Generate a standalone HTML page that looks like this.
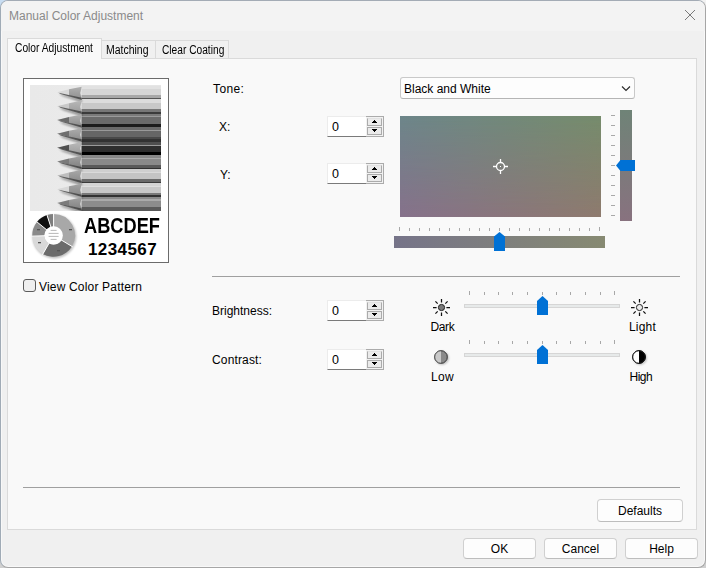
<!DOCTYPE html>
<html><head><meta charset="utf-8">
<style>
html,body{margin:0;padding:0;width:706px;height:568px;overflow:hidden;background:#d0d0d0;}
*{box-sizing:border-box;}
body{font-family:"Liberation Sans",sans-serif;font-size:12px;color:#000;}
.a{position:absolute;}
.t{position:absolute;white-space:nowrap;line-height:12px;font-size:12px;}
#win{position:absolute;left:0;top:0;width:706px;height:568px;border:1px solid #a6a6a6;border-top-color:#a3abb5;border-left-color:#a0abb6;border-radius:8px;background:#f0f0f0;overflow:hidden;box-shadow:inset 0 0 0 1px #f8f8f8;}
#title{position:absolute;left:0;top:0;width:704px;height:30px;background:#f3f3f3;}
.tab{position:absolute;border:1px solid #dadada;border-bottom:none;background:#f0f0f0;}
.spin{position:absolute;width:57px;height:21px;}
.spin .f{position:absolute;left:0;top:0;width:39px;height:21px;background:#fff;border:1px solid #ececec;border-right:none;border-bottom:1px solid #7a7a7a;}
.spin .b{position:absolute;left:39px;top:0;width:18px;height:21px;border:1px solid #ababab;border-left:none;background:#f2f2f2;}
.spin .u,.spin .d{position:absolute;left:1px;width:15px;height:8px;border:1px solid #ababab;background:#ebebeb;}
.spin .u{top:1px;border-top-color:#e2e2e2;height:8px;}
.spin .d{top:10px;}
.spin .v{position:absolute;left:4px;top:4px;line-height:12px;font-size:12.5px;}
.spin svg{position:absolute;left:0;top:0;}
.btn{position:absolute;border:1px solid #d0d0d0;border-bottom-color:#bdbdbd;border-radius:4px;background:#fdfdfd;text-align:center;}
</style></head><body>
<div class="a" style="left:0;top:0;width:12px;height:12px;background:#c8ddf2;"></div>
<div class="a" style="left:694px;top:0;width:12px;height:12px;background:#f2f2f2;"></div>
<div id="win">
  <div id="title"></div>
</div>
<!-- title text -->
<div class="t" style="left:9px;top:10px;color:#8a8a8a;">Manual Color Adjustment</div>
<svg class="a" style="left:684px;top:9px" width="12" height="12"><path d="M1 1L11 11M11 1L1 11" stroke="#7a7a7a" stroke-width="1"/></svg>

<!-- tab panel -->
<div class="a" style="left:7px;top:58px;width:690px;height:472px;border:1px solid #dadada;background:#f9f9f9;"></div>
<div class="tab" style="left:101px;top:40px;width:55px;height:18px;"></div>
<div class="tab" style="left:155px;top:40px;width:74px;height:18px;"></div>
<div class="tab" style="left:7px;top:38px;width:95px;height:21px;background:#f9f9f9;"></div>
<div class="t" style="left:15px;top:42px;transform:scaleX(0.853);transform-origin:0 0;">Color Adjustment</div>
<div class="t" style="left:106px;top:44px;transform:scaleX(0.873);transform-origin:0 0;">Matching</div>
<div class="t" style="left:162px;top:44px;transform:scaleX(0.849);transform-origin:0 0;">Clear Coating</div>


<!-- preview frame -->
<div class="a" style="left:23px;top:78px;width:146px;height:185px;border:1px solid #6b6b6b;background:#fff;"></div>
<div id="photo" class="a" style="left:30px;top:85px;width:131px;height:126px;background:#e9e9e9;overflow:hidden;"><svg width="131" height="126" viewBox="0 0 131 126" style="position:absolute;left:0;top:0">
<defs><linearGradient id="pbg" x1="0" y1="0" x2="1" y2="0"><stop offset="0" stop-color="#e9e9e9"/><stop offset="1" stop-color="#ececec"/></linearGradient>
<filter id="bl" x="-20%" y="-80%" width="140%" height="260%"><feGaussianBlur stdDeviation="1.1"/></filter>
<filter id="bl2" x="-20%" y="-80%" width="140%" height="260%"><feGaussianBlur stdDeviation="0.5"/></filter>
<filter id="bb" x="0" y="0" width="100%" height="100%"><feGaussianBlur stdDeviation="0.45"/></filter>
<linearGradient id="w0" x1="0" y1="0" x2="0" y2="1"><stop offset="0" stop-color="#b0b0b0"/><stop offset="1" stop-color="#8e8e8e"/></linearGradient><linearGradient id="w1" x1="0" y1="0" x2="0" y2="1"><stop offset="0" stop-color="#b8b8b8"/><stop offset="1" stop-color="#9a9a9a"/></linearGradient><linearGradient id="w2" x1="0" y1="0" x2="0" y2="1"><stop offset="0" stop-color="#b0b0b0"/><stop offset="1" stop-color="#8a8a8a"/></linearGradient><linearGradient id="w3" x1="0" y1="0" x2="0" y2="1"><stop offset="0" stop-color="#acacac"/><stop offset="1" stop-color="#8a8a8a"/></linearGradient><linearGradient id="w4" x1="0" y1="0" x2="0" y2="1"><stop offset="0" stop-color="#bababa"/><stop offset="1" stop-color="#9a9a9a"/></linearGradient><linearGradient id="w5" x1="0" y1="0" x2="0" y2="1"><stop offset="0" stop-color="#a0a0a0"/><stop offset="1" stop-color="#7e7e7e"/></linearGradient><linearGradient id="w6" x1="0" y1="0" x2="0" y2="1"><stop offset="0" stop-color="#a8a8a8"/><stop offset="1" stop-color="#888888"/></linearGradient><linearGradient id="w7" x1="0" y1="0" x2="0" y2="1"><stop offset="0" stop-color="#a4a4a4"/><stop offset="1" stop-color="#868686"/></linearGradient><linearGradient id="w8" x1="0" y1="0" x2="0" y2="1"><stop offset="0" stop-color="#a0a0a0"/><stop offset="1" stop-color="#808080"/></linearGradient></defs>
<rect width="131" height="126" fill="url(#pbg)"/>
<g filter="url(#bb)"><linearGradient id="bandg" gradientUnits="userSpaceOnUse" x1="0" y1="0" x2="0" y2="126"><stop offset="0.0000" stop-color="#e6e6e6"/><stop offset="0.0111" stop-color="#e6e6e6"/><stop offset="0.0111" stop-color="#e2e2e2"/><stop offset="0.0317" stop-color="#e2e2e2"/><stop offset="0.0317" stop-color="#d6d6d6"/><stop offset="0.0794" stop-color="#d6d6d6"/><stop offset="0.0794" stop-color="#a8a8a8"/><stop offset="0.1016" stop-color="#a8a8a8"/><stop offset="0.1016" stop-color="#555555"/><stop offset="0.1127" stop-color="#555555"/><stop offset="0.1127" stop-color="#dcdcdc"/><stop offset="0.1405" stop-color="#dcdcdc"/><stop offset="0.1405" stop-color="#c8c8c8"/><stop offset="0.1913" stop-color="#c8c8c8"/><stop offset="0.1913" stop-color="#777777"/><stop offset="0.2135" stop-color="#777777"/><stop offset="0.2135" stop-color="#3a3a3a"/><stop offset="0.2278" stop-color="#3a3a3a"/><stop offset="0.2278" stop-color="#7a7a7a"/><stop offset="0.2468" stop-color="#7a7a7a"/><stop offset="0.2468" stop-color="#9a9a9a"/><stop offset="0.2579" stop-color="#9a9a9a"/><stop offset="0.2579" stop-color="#6a6a6a"/><stop offset="0.3087" stop-color="#6a6a6a"/><stop offset="0.3087" stop-color="#1a1a1a"/><stop offset="0.3310" stop-color="#1a1a1a"/><stop offset="0.3310" stop-color="#6a6a6a"/><stop offset="0.3532" stop-color="#6a6a6a"/><stop offset="0.3532" stop-color="#999999"/><stop offset="0.3635" stop-color="#999999"/><stop offset="0.3635" stop-color="#666666"/><stop offset="0.4159" stop-color="#666666"/><stop offset="0.4159" stop-color="#4a4a4a"/><stop offset="0.4325" stop-color="#4a4a4a"/><stop offset="0.4325" stop-color="#333333"/><stop offset="0.4492" stop-color="#333333"/><stop offset="0.4492" stop-color="#505050"/><stop offset="0.4746" stop-color="#505050"/><stop offset="0.4746" stop-color="#9a9a9a"/><stop offset="0.4825" stop-color="#9a9a9a"/><stop offset="0.4825" stop-color="#2e2e2e"/><stop offset="0.5357" stop-color="#2e2e2e"/><stop offset="0.5357" stop-color="#050505"/><stop offset="0.5524" stop-color="#050505"/><stop offset="0.5524" stop-color="#888888"/><stop offset="0.5754" stop-color="#888888"/><stop offset="0.5754" stop-color="#aaaaaa"/><stop offset="0.5865" stop-color="#aaaaaa"/><stop offset="0.5865" stop-color="#8a8a8a"/><stop offset="0.6365" stop-color="#8a8a8a"/><stop offset="0.6365" stop-color="#5a5a5a"/><stop offset="0.6571" stop-color="#5a5a5a"/><stop offset="0.6571" stop-color="#303030"/><stop offset="0.6659" stop-color="#303030"/><stop offset="0.6659" stop-color="#cfcfcf"/><stop offset="0.6905" stop-color="#cfcfcf"/><stop offset="0.6905" stop-color="#dadada"/><stop offset="0.6992" stop-color="#dadada"/><stop offset="0.6992" stop-color="#c4c4c4"/><stop offset="0.7437" stop-color="#c4c4c4"/><stop offset="0.7437" stop-color="#6a6a6a"/><stop offset="0.7659" stop-color="#6a6a6a"/><stop offset="0.7659" stop-color="#3a3a3a"/><stop offset="0.7778" stop-color="#3a3a3a"/><stop offset="0.7778" stop-color="#d4d4d4"/><stop offset="0.8024" stop-color="#d4d4d4"/><stop offset="0.8024" stop-color="#dedede"/><stop offset="0.8111" stop-color="#dedede"/><stop offset="0.8111" stop-color="#c8c8c8"/><stop offset="0.8532" stop-color="#c8c8c8"/><stop offset="0.8532" stop-color="#7a7a7a"/><stop offset="0.8754" stop-color="#7a7a7a"/><stop offset="0.8754" stop-color="#333333"/><stop offset="0.8889" stop-color="#333333"/><stop offset="0.8889" stop-color="#8a8a8a"/><stop offset="0.9087" stop-color="#8a8a8a"/><stop offset="0.9087" stop-color="#aaaaaa"/><stop offset="0.9198" stop-color="#aaaaaa"/><stop offset="0.9198" stop-color="#8c8c8c"/><stop offset="0.9722" stop-color="#8c8c8c"/><stop offset="0.9722" stop-color="#5a5a5a"/><stop offset="1.0000" stop-color="#5a5a5a"/></linearGradient><rect x="51.5" y="0" width="79.5" height="126" fill="url(#bandg)"/></g>
<polygon points="29,8.499999999999996 51.7,14.699999999999998 51.7,17.299999999999997 33,11.099999999999998" fill="#000" opacity="0.45" filter="url(#bl)"/><polygon points="39,4.299999999999997 51.7,1.6999999999999975 50.300000000000004,8.099999999999998 51.7,14.599999999999998 39,10.299999999999997" fill="url(#w0)"/><polygon points="27,7.299999999999997 39,4.299999999999997 39,10.299999999999997" fill="#d9d9d9"/><polygon points="28.5,7.6999999999999975 51.7,12.699999999999998 51.7,15.099999999999998 30.5,8.899999999999997" fill="#333" opacity="0.7" filter="url(#bl2)"/><polygon points="29,22.34999999999999 51.7,28.54999999999999 51.7,31.14999999999999 33,24.949999999999992" fill="#000" opacity="0.45" filter="url(#bl)"/><polygon points="39,18.14999999999999 51.7,15.549999999999992 50.300000000000004,21.949999999999992 51.7,28.449999999999992 39,24.14999999999999" fill="url(#w1)"/><polygon points="27,21.14999999999999 39,18.14999999999999 39,24.14999999999999" fill="#c9c9c9"/><polygon points="28.5,21.54999999999999 51.7,26.54999999999999 51.7,28.949999999999992 30.5,22.749999999999993" fill="#333" opacity="0.7" filter="url(#bl2)"/><polygon points="29,36.2 51.7,42.4 51.7,45.0 33,38.8" fill="#000" opacity="0.45" filter="url(#bl)"/><polygon points="39,32.0 51.7,29.4 50.300000000000004,35.8 51.7,42.3 39,38.0" fill="url(#w2)"/><polygon points="27,35.0 39,32.0 39,38.0" fill="#6a6a6a"/><polygon points="28.5,35.4 51.7,40.4 51.7,42.8 30.5,36.6" fill="#333" opacity="0.7" filter="url(#bl2)"/><polygon points="29,50.05 51.7,56.24999999999999 51.7,58.849999999999994 33,52.64999999999999" fill="#000" opacity="0.45" filter="url(#bl)"/><polygon points="39,45.849999999999994 51.7,43.24999999999999 50.300000000000004,49.64999999999999 51.7,56.14999999999999 39,51.849999999999994" fill="url(#w3)"/><polygon points="27,48.849999999999994 39,45.849999999999994 39,51.849999999999994" fill="#6e6e6e"/><polygon points="28.5,49.24999999999999 51.7,54.24999999999999 51.7,56.64999999999999 30.5,50.449999999999996" fill="#333" opacity="0.7" filter="url(#bl2)"/><polygon points="29,63.89999999999999 51.7,70.1 51.7,72.69999999999999 33,66.49999999999999" fill="#000" opacity="0.45" filter="url(#bl)"/><polygon points="39,59.69999999999999 51.7,57.09999999999999 50.300000000000004,63.499999999999986 51.7,69.99999999999999 39,65.69999999999999" fill="url(#w4)"/><polygon points="27,62.69999999999999 39,59.69999999999999 39,65.69999999999999" fill="#505050"/><polygon points="28.5,63.09999999999999 51.7,68.1 51.7,70.49999999999999 30.5,64.29999999999998" fill="#333" opacity="0.7" filter="url(#bl2)"/><polygon points="29,77.75000000000001 51.7,83.95000000000002 51.7,86.55000000000001 33,80.35000000000001" fill="#000" opacity="0.45" filter="url(#bl)"/><polygon points="39,73.55000000000001 51.7,70.95000000000002 50.300000000000004,77.35000000000001 51.7,83.85000000000001 39,79.55000000000001" fill="url(#w5)"/><polygon points="27,76.55000000000001 39,73.55000000000001 39,79.55000000000001" fill="#7a7a7a"/><polygon points="28.5,76.95000000000002 51.7,81.95000000000002 51.7,84.35000000000001 30.5,78.15" fill="#333" opacity="0.7" filter="url(#bl2)"/><polygon points="29,91.59999999999998 51.7,97.79999999999998 51.7,100.39999999999998 33,94.19999999999997" fill="#000" opacity="0.45" filter="url(#bl)"/><polygon points="39,87.39999999999998 51.7,84.79999999999998 50.300000000000004,91.19999999999997 51.7,97.69999999999997 39,93.39999999999998" fill="url(#w6)"/><polygon points="27,90.39999999999998 39,87.39999999999998 39,93.39999999999998" fill="#bdbdbd"/><polygon points="28.5,90.79999999999998 51.7,95.79999999999998 51.7,98.19999999999997 30.5,91.99999999999997" fill="#333" opacity="0.7" filter="url(#bl2)"/><polygon points="29,105.45 51.7,111.65 51.7,114.25 33,108.05" fill="#000" opacity="0.45" filter="url(#bl)"/><polygon points="39,101.25 51.7,98.65 50.300000000000004,105.05 51.7,111.55 39,107.25" fill="url(#w7)"/><polygon points="27,104.25 39,101.25 39,107.25" fill="#d8d8d8"/><polygon points="28.5,104.65 51.7,109.65 51.7,112.05 30.5,105.85" fill="#333" opacity="0.7" filter="url(#bl2)"/><polygon points="29,119.3 51.7,125.5 51.7,128.1 33,121.89999999999999" fill="#000" opacity="0.45" filter="url(#bl)"/><polygon points="39,115.1 51.7,112.5 50.300000000000004,118.89999999999999 51.7,125.39999999999999 39,121.1" fill="url(#w8)"/><polygon points="27,118.1 39,115.1 39,121.1" fill="#7c7c7c"/><polygon points="28.5,118.5 51.7,123.5 51.7,125.89999999999999 30.5,119.69999999999999" fill="#333" opacity="0.7" filter="url(#bl2)"/>
</svg></div>
<div class="a" style="left:23px;top:279px;width:13px;height:13px;border:1px solid #5c5c5c;border-radius:3px;background:#efefef;"></div>
<div class="t" style="left:39px;top:281px;letter-spacing:0.18px;">View Color Pattern</div>
<!--PIE--><svg class="a" style="left:0;top:0" width="706" height="568" viewBox="0 0 706 568" pointer-events="none">
<filter id="pshadow" x="-30%" y="-30%" width="160%" height="160%"><feGaussianBlur stdDeviation="1"/></filter>
<circle cx="54.4" cy="236.6" r="21.9" fill="#000" opacity="0.25" filter="url(#pshadow)"/>
<path d="M53.60 214.00A21.4 21.4 0 0 1 71.94 246.42L61.49 240.14A9.2 9.2 0 0 0 53.60 226.20Z" fill="#a8a8a8"/><path d="M71.94 246.42A21.4 21.4 0 0 1 42.90 253.93L49.00 243.37A9.2 9.2 0 0 0 61.49 240.14Z" fill="#6b6b6b"/><path d="M42.90 253.93A21.4 21.4 0 0 1 32.21 236.15L44.41 235.72A9.2 9.2 0 0 0 49.00 243.37Z" fill="#d9d9d9"/><path d="M32.21 236.15A21.4 21.4 0 0 1 36.97 221.93L46.45 229.61A9.2 9.2 0 0 0 44.41 235.72Z" fill="#8a8a8a"/><path d="M36.97 221.93A21.4 21.4 0 0 1 46.99 215.05L50.76 226.65A9.2 9.2 0 0 0 46.45 229.61Z" fill="#111111"/><path d="M46.99 215.05A21.4 21.4 0 0 1 53.60 214.00L53.60 226.20A9.2 9.2 0 0 0 50.76 226.65Z" fill="#7e7e7e"/><line x1="53.60" y1="227.20" x2="53.60" y2="213.00" stroke="#fff" stroke-width="1"/><line x1="60.63" y1="239.62" x2="72.80" y2="246.94" stroke="#fff" stroke-width="1"/><line x1="49.50" y1="242.50" x2="42.40" y2="254.80" stroke="#fff" stroke-width="1"/><line x1="45.40" y1="235.69" x2="31.21" y2="236.18" stroke="#fff" stroke-width="1"/><line x1="47.23" y1="230.24" x2="36.19" y2="221.30" stroke="#fff" stroke-width="1"/><line x1="51.07" y1="227.60" x2="46.68" y2="214.10" stroke="#fff" stroke-width="1"/>
<circle cx="53.6" cy="235.4" r="9.2" fill="#fff"/>
<g fill="#555" font-family="Liberation Sans" font-size="2.6" text-anchor="middle">
<rect x="50.6" y="229.9" width="6" height="0.9" fill="#b0b0b0"/>
<rect x="48.6" y="232.9" width="10" height="0.9" fill="#b0b0b0"/>
<rect x="48.6" y="235.9" width="10" height="0.9" fill="#b0b0b0"/>
<rect x="50.6" y="238.9" width="6" height="0.9" fill="#b0b0b0"/>
</g>
<g fill="#555">
<rect x="69" y="229" width="3" height="1.3"/><rect x="37" y="229" width="3" height="1.3"/>
<rect x="38" y="242" width="3" height="1.3"/><rect x="57" y="250" width="3" height="1.3"/>
</g>
</svg><!--/PIE-->
<div class="a" style="left:84px;top:212px;font-weight:bold;font-size:22.5px;line-height:27px;transform:scaleX(0.81);transform-origin:0 0;white-space:nowrap;">ABCDEF</div>
<div class="a" style="left:88px;top:240px;font-weight:bold;font-size:17px;line-height:20px;letter-spacing:0.4px;white-space:nowrap;">1234567</div>

<!-- labels -->
<div class="t" style="left:213px;top:83px;letter-spacing:0.4px;">Tone:</div>
<div class="t" style="left:219px;top:121px;">X:</div>
<div class="t" style="left:220px;top:169px;">Y:</div>
<div class="t" style="left:212px;top:305px;">Brightness:</div>
<div class="t" style="left:212px;top:354px;letter-spacing:0.15px;">Contrast:</div>

<!-- spins -->
<div class="spin" style="left:327px;top:116px;"><div class="f"><span class="v">0</span></div><div class="b"><div class="u"></div><div class="d"></div></div><svg width="57" height="21"><path d="M47 4h1v1h-1zM46 5h3v1h-3zM45 6h5v1h-5zM45 13h5v1h-5zM46 14h3v1h-3zM47 15h1v1h-1z" fill="#000"/></svg></div>
<div class="spin" style="left:327px;top:163px;"><div class="f"><span class="v">0</span></div><div class="b"><div class="u"></div><div class="d"></div></div><svg width="57" height="21"><path d="M47 4h1v1h-1zM46 5h3v1h-3zM45 6h5v1h-5zM45 13h5v1h-5zM46 14h3v1h-3zM47 15h1v1h-1z" fill="#000"/></svg></div>
<div class="spin" style="left:327px;top:300px;"><div class="f"><span class="v">0</span></div><div class="b"><div class="u"></div><div class="d"></div></div><svg width="57" height="21"><path d="M47 4h1v1h-1zM46 5h3v1h-3zM45 6h5v1h-5zM45 13h5v1h-5zM46 14h3v1h-3zM47 15h1v1h-1z" fill="#000"/></svg></div>
<div class="spin" style="left:327px;top:349px;"><div class="f"><span class="v">0</span></div><div class="b"><div class="u"></div><div class="d"></div></div><svg width="57" height="21"><path d="M47 4h1v1h-1zM46 5h3v1h-3zM45 6h5v1h-5zM45 13h5v1h-5zM46 14h3v1h-3zM47 15h1v1h-1z" fill="#000"/></svg></div>

<!-- dropdown -->
<div class="a" style="left:400px;top:77px;width:235px;height:22px;border:1px solid #c9c9c9;border-bottom-color:#b5b5b5;border-radius:3px;background:#fdfdfd;"></div>
<div class="t" style="left:404px;top:83px;">Black and White</div>
<svg class="a" style="left:620px;top:84px" width="12" height="8"><path d="M2 2.5L6 6.5L10 2.5" fill="none" stroke="#2a2a2a" stroke-width="1.15"/></svg>

<!-- color area -->
<svg class="a" style="left:400px;top:116px" width="201" height="101">
<defs>
<linearGradient id="gt" x1="0" y1="0" x2="1" y2="0"><stop offset="0" stop-color="#6d868a"/><stop offset="1" stop-color="#768c6c"/></linearGradient>
<linearGradient id="gb" x1="0" y1="0" x2="1" y2="0"><stop offset="0" stop-color="#86718b"/><stop offset="1" stop-color="#8e7a6e"/></linearGradient>
<linearGradient id="gm" x1="0" y1="0" x2="0" y2="1"><stop offset="0" stop-color="#fff" stop-opacity="0"/><stop offset="1" stop-color="#fff" stop-opacity="1"/></linearGradient>
<mask id="mk"><rect width="201" height="101" fill="url(#gm)"/></mask>
</defs>
<rect width="201" height="101" fill="url(#gt)"/>
<rect width="201" height="101" fill="url(#gb)" mask="url(#mk)"/>
<g stroke="#fff" stroke-width="1.3" fill="none"><circle cx="100.5" cy="50.5" r="4"/><path d="M93 50.5H96.5M104.5 50.5H108M100.5 43V46.5M100.5 54.5V58"/></g>
<rect x="100" y="50" width="1" height="1" fill="#fff"/>
</svg>
<div class="a" style="left:620px;top:110px;width:12px;height:111px;background:linear-gradient(to bottom,#6f8377,#88727f);"></div>
<div class="a" style="left:394px;top:236px;width:211px;height:12px;background:linear-gradient(to right,#767489,#878a72);"></div>

<!-- separators -->
<div class="a" style="left:212px;top:276px;width:468px;height:1px;background:#a0a0a0;"></div>
<div class="a" style="left:23px;top:487px;width:657px;height:1px;background:#a0a0a0;"></div>

<!-- sliders tracks -->
<div class="a" style="left:464px;top:304px;width:156px;height:4px;border:1px solid #d6d6d6;background:#e7eaea;"></div>
<div class="a" style="left:464px;top:353px;width:156px;height:4px;border:1px solid #d6d6d6;background:#e7eaea;"></div>
<div class="t" style="left:430.5px;top:321px;letter-spacing:-0.4px;">Dark</div>
<div class="t" style="left:629px;top:321px;letter-spacing:0.2px;">Light</div>
<div class="t" style="left:431px;top:371px;letter-spacing:0.3px;">Low</div>
<div class="t" style="left:629.5px;top:371px;letter-spacing:-0.5px;">High</div>

<!--TICKS--><svg class="a" style="left:0;top:0" width="706" height="568" pointer-events="none">
<g stroke="#a8a8a8" stroke-width="1"><line x1="399.5" y1="227" x2="399.5" y2="231"/><line x1="409.5" y1="228" x2="409.5" y2="231"/><line x1="419.5" y1="228" x2="419.5" y2="231"/><line x1="429.5" y1="228" x2="429.5" y2="231"/><line x1="439.5" y1="228" x2="439.5" y2="231"/><line x1="449.5" y1="228" x2="449.5" y2="231"/><line x1="459.5" y1="228" x2="459.5" y2="231"/><line x1="469.5" y1="228" x2="469.5" y2="231"/><line x1="479.5" y1="228" x2="479.5" y2="231"/><line x1="489.5" y1="228" x2="489.5" y2="231"/><line x1="499.5" y1="228" x2="499.5" y2="231"/><line x1="509.5" y1="228" x2="509.5" y2="231"/><line x1="519.5" y1="228" x2="519.5" y2="231"/><line x1="529.5" y1="228" x2="529.5" y2="231"/><line x1="539.5" y1="228" x2="539.5" y2="231"/><line x1="549.5" y1="228" x2="549.5" y2="231"/><line x1="559.5" y1="228" x2="559.5" y2="231"/><line x1="569.5" y1="228" x2="569.5" y2="231"/><line x1="579.5" y1="228" x2="579.5" y2="231"/><line x1="589.5" y1="228" x2="589.5" y2="231"/><line x1="599.5" y1="227" x2="599.5" y2="231"/><line x1="611" y1="115.5" x2="615" y2="115.5"/><line x1="611" y1="125.5" x2="615" y2="125.5"/><line x1="611" y1="135.5" x2="615" y2="135.5"/><line x1="611" y1="145.5" x2="615" y2="145.5"/><line x1="611" y1="155.5" x2="615" y2="155.5"/><line x1="611" y1="165.5" x2="615" y2="165.5"/><line x1="611" y1="175.5" x2="615" y2="175.5"/><line x1="611" y1="185.5" x2="615" y2="185.5"/><line x1="611" y1="195.5" x2="615" y2="195.5"/><line x1="611" y1="205.5" x2="615" y2="205.5"/><line x1="611" y1="215.5" x2="615" y2="215.5"/><line x1="469.5" y1="291" x2="469.5" y2="295"/><line x1="484.5" y1="292" x2="484.5" y2="295"/><line x1="498.5" y1="292" x2="498.5" y2="295"/><line x1="512.5" y1="292" x2="512.5" y2="295"/><line x1="527.5" y1="292" x2="527.5" y2="295"/><line x1="542.5" y1="292" x2="542.5" y2="295"/><line x1="556.5" y1="292" x2="556.5" y2="295"/><line x1="570.5" y1="292" x2="570.5" y2="295"/><line x1="585.5" y1="292" x2="585.5" y2="295"/><line x1="600.5" y1="292" x2="600.5" y2="295"/><line x1="614.5" y1="291" x2="614.5" y2="295"/><line x1="469.5" y1="340" x2="469.5" y2="344"/><line x1="484.5" y1="341" x2="484.5" y2="344"/><line x1="498.5" y1="341" x2="498.5" y2="344"/><line x1="512.5" y1="341" x2="512.5" y2="344"/><line x1="527.5" y1="341" x2="527.5" y2="344"/><line x1="542.5" y1="341" x2="542.5" y2="344"/><line x1="556.5" y1="341" x2="556.5" y2="344"/><line x1="570.5" y1="341" x2="570.5" y2="344"/><line x1="585.5" y1="341" x2="585.5" y2="344"/><line x1="600.5" y1="341" x2="600.5" y2="344"/><line x1="614.5" y1="340" x2="614.5" y2="344"/></g>
<g fill="#0071d5">
<path d="M494 236.5L499.5 232L505 236.5V251H494Z"/>
<path d="M620.5 160H635V171H620.5L616 165.5Z"/>
<path d="M537 301L542.5 296L548 301V315H537Z"/>
<path d="M537 350L542.5 345L548 350V364H537Z"/>
</g>
</svg><!--/TICKS-->
<!--ICONS--><svg class="a" style="left:0;top:0" width="706" height="568" pointer-events="none">
<filter id="ish" x="-50%" y="-50%" width="200%" height="200%"><feGaussianBlur stdDeviation="0.9"/></filter>
<path d="M446.40 307.50L450.00 307.50M445.32 311.32L447.58 313.58M441.50 312.40L441.50 316.00M437.68 311.32L435.42 313.58M436.60 307.50L433.00 307.50M437.68 303.68L435.42 301.42M441.50 302.60L441.50 299.00M445.32 303.68L447.58 301.42" stroke="#111" stroke-width="1.25"/><circle cx="441.5" cy="307.5" r="3.1" fill="#7a7a7a" stroke="#222" stroke-width="1"/>
<path d="M644.40 307.50L648.00 307.50M643.32 311.32L645.58 313.58M639.50 312.40L639.50 316.00M635.68 311.32L633.42 313.58M634.60 307.50L631.00 307.50M635.68 303.68L633.42 301.42M639.50 302.60L639.50 299.00M643.32 303.68L645.58 301.42" stroke="#111" stroke-width="1.25"/><circle cx="639.5" cy="307.5" r="3.1" fill="#ececec" stroke="#222" stroke-width="1"/>
<circle cx="442" cy="358" r="6.8" fill="#000" opacity="0.25" filter="url(#ish)"/>
<circle cx="441" cy="357" r="6.3" fill="#8a8a8a" stroke="#575757" stroke-width="1"/>
<path d="M441 350.7A6.3 6.3 0 0 0 441 363.3Z" fill="#c9c9c9"/>
<circle cx="441" cy="357" r="6.3" fill="none" stroke="#575757" stroke-width="1"/>
<circle cx="640" cy="358" r="6.8" fill="#000" opacity="0.25" filter="url(#ish)"/>
<circle cx="639" cy="357" r="6.3" fill="#000" stroke="#111" stroke-width="1"/>
<path d="M639 350.7A6.3 6.3 0 0 0 639 363.3Z" fill="#fff"/>
<circle cx="639" cy="357" r="6.3" fill="none" stroke="#111" stroke-width="1"/>
</svg><!--/ICONS-->
<!-- buttons -->
<div class="btn" style="left:597px;top:499px;width:86px;height:23px;line-height:22px;">Defaults</div>
<div class="btn" style="left:463px;top:538px;width:73px;height:21px;line-height:21px;">OK</div>
<div class="btn" style="left:544px;top:538px;width:73px;height:21px;line-height:21px;">Cancel</div>
<div class="btn" style="left:625px;top:538px;width:73px;height:21px;line-height:21px;">Help</div>

</body></html>
